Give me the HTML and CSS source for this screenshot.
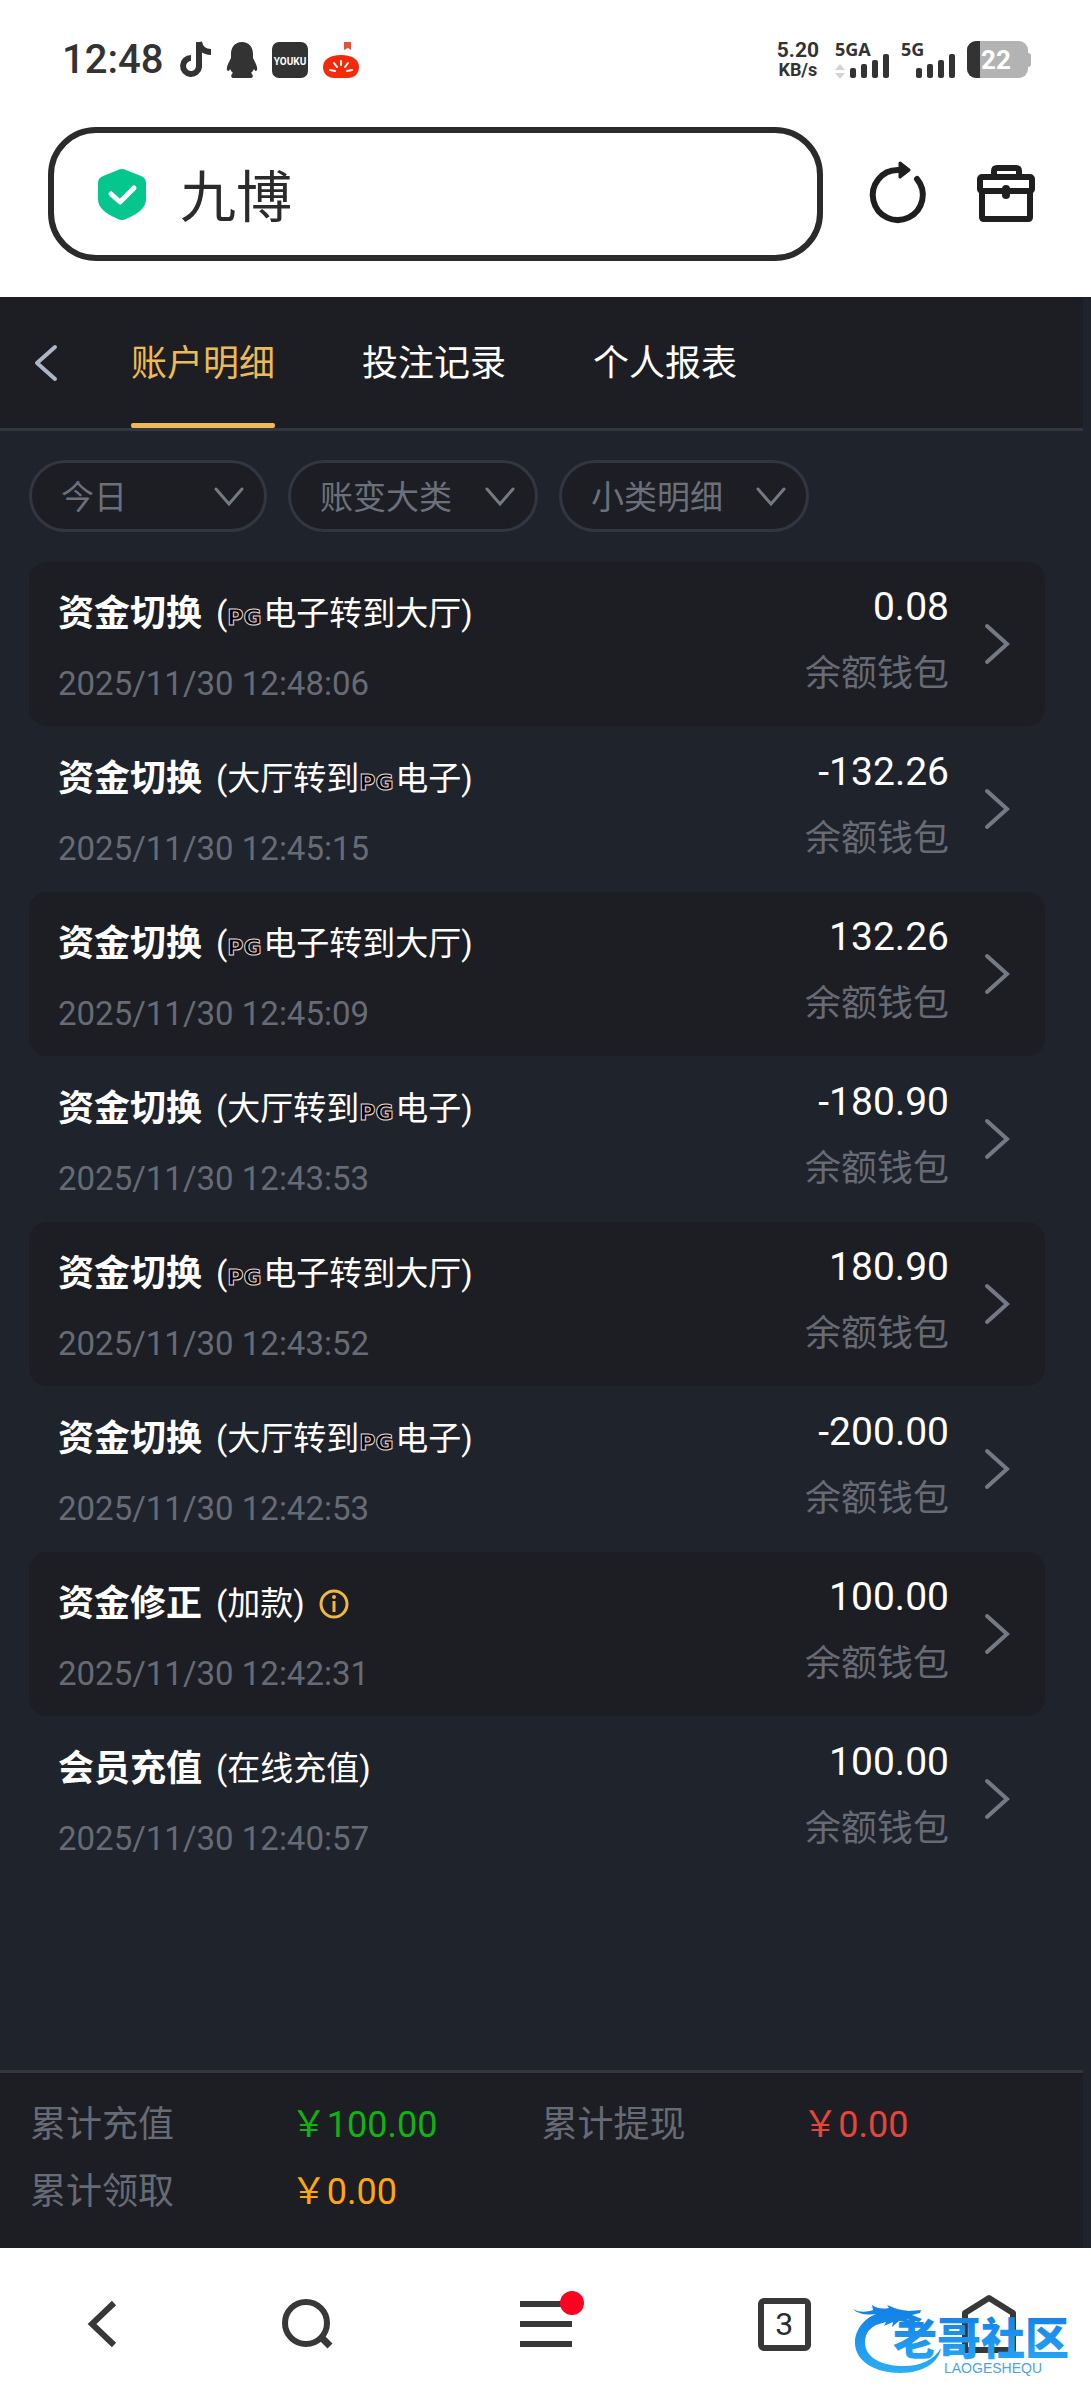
FILE: index.html
```html
<!DOCTYPE html>
<html lang="zh-CN">
<head>
    <meta charset="UTF-8">
    <meta name="viewport" content="width=device-width, initial-scale=1.0">
    <title>九博</title>
    <link rel="stylesheet" href="styles.css">
</head>
<body>
    <div class="status-bar">
        <div class="status-left">
            <span class="clock">12:48</span>
            <svg width="32" height="36" viewBox="0 0 32 36" fill="none" stroke="#333" stroke-width="6">
                <path d="M19 0V25a8 8 0 1 1-8-9" />
                <path d="M19 0c1 6 5 10 12 10" />
            </svg>
            <svg width="30" height="36" viewBox="0 0 30 36" fill="#333">
                <path d="M15 0c7 0 11 5 11 12v4c2 4 5 9 4 12-1 2-2 1-3-1-1 2-2 3-3 4 2 1 3 5-1 5h-5c-2 0-4 0-6 0H7c-4 0-3-4-1-5-1-1-2-2-3-4-1 2-2 3-3 1-1-3 2-8 4-12v-4C4 5 8 0 15 0z" />
            </svg>
            <svg width="36" height="36" viewBox="0 0 36 36">
                <rect width="36" height="36" rx="7" fill="#333" />
                <text x="18" y="23" text-anchor="middle" class="youku-text">youku</text>
            </svg>
            <svg width="36" height="36" viewBox="0 0 36 36">
                <path d="M21 0h7v8l-3-2-4 2z" fill="#e2543a" />
                <path d="M18 13c12 0 18 5 18 12 0 7-5 11-11 11H11C5 36 0 32 0 25c0-7 6-12 18-12z" fill="#f52a0c" />
                <path d="M18 19v4M11 21l3 4M25 21l-3 4M7 28l5 1M29 28l-5 1" stroke="#fff" stroke-width="2" stroke-linecap="round" />
            </svg>
        </div>
        <div class="status-right">
            <div class="net-speed">
                <span class="speed-value">5.20</span>
                <span class="speed-unit">KB/s</span>
            </div>
            <svg width="56" height="38" viewBox="0 0 56 38" fill="#333">
                <text x="0" y="15" class="signal-text">5GA</text>
                <path d="M5 23l5 6H0zM5 38l5-6H0z" fill="#d4d4d4" />
                <rect x="15" y="27" width="6" height="10" rx="2" />
                <rect x="26" y="23" width="6" height="14" rx="2" />
                <rect x="37" y="19" width="6" height="18" rx="2" />
                <rect x="48" y="13" width="6" height="24" rx="2" />
            </svg>
            <svg width="56" height="38" viewBox="0 0 56 38" fill="#333">
                <text x="0" y="15" class="signal-text">5G</text>
                <rect x="15" y="27" width="6" height="10" rx="2" />
                <rect x="26" y="23" width="6" height="14" rx="2" />
                <rect x="37" y="19" width="6" height="18" rx="2" />
                <rect x="48" y="13" width="6" height="24" rx="2" />
            </svg>
            <svg width="64" height="38" viewBox="0 0 64 38">
                <rect x="56" y="12" width="8" height="14" rx="3" fill="#b3b3b3" />
                <rect width="61" height="37" rx="9" fill="#b3b3b3" />
                <path d="M9 0h4v37H9a9 9 0 0 1-9-9V9a9 9 0 0 1 9-9z" fill="#333" />
                <text x="29" y="28" text-anchor="middle" class="battery-text">22</text>
            </svg>
        </div>
    </div>

    <div class="toolbar">
        <label class="search-box">
            <svg width="48" height="52" viewBox="0 0 48 52">
                <path d="M20 2q4-2 8 0l15 6q5 2 5 7v16c0 8-6 14-20 20q-4 2-8 0C6 45 0 39 0 31V15q0-5 5-7z" fill="#05c68d" />
                <path d="M13 26l9 8 14-14" fill="none" stroke="#fff" stroke-width="5" stroke-linecap="round" stroke-linejoin="round" />
            </svg>
            <input type="text" class="search-input" value="九博" aria-label="搜索">
        </label>
        <button class="icon-btn" aria-label="刷新">
            <svg width="58" height="64" viewBox="0 0 58 64" fill="none" stroke="#1f1f1f" stroke-width="6" stroke-linecap="round">
                <path d="M27 8a25 25 0 1 0 19 9" />
                <path d="M29 1l9 7-9 7z" fill="#1f1f1f" stroke-width="3" stroke-linejoin="round" />
            </svg>
        </button>
        <button class="icon-btn" aria-label="工具箱">
            <svg width="58" height="58" viewBox="0 0 58 58" fill="none" stroke="#1f1f1f" stroke-width="6" stroke-linejoin="round">
                <path d="M17 11V6q0-3 3-3h19q3 0 3 3v5" />
                <rect x="3" y="12" width="52" height="14" rx="2" />
                <path d="M5 26v26q0 2 2 2h44q2 0 2-2V26" />
                <path d="M29 24v6" stroke-width="8" stroke-linecap="round" />
            </svg>
        </button>
    </div>

    <main class="page">
        <header class="page-header">
            <button class="back-btn" aria-label="返回">
                <svg width="24" height="36" viewBox="0 0 24 36" fill="none" stroke="#adb6c4" stroke-width="4" stroke-linecap="round" stroke-linejoin="round">
                    <path d="M21 2L3 18l18 16" />
                </svg>
            </button>
            <nav class="tabs">
                <a href="#" class="tab active">账户明细</a>
                <a href="#" class="tab">投注记录</a>
                <a href="#" class="tab">个人报表</a>
            </nav>
        </header>

        <div class="filters">
            <div class="filter filter-date">
                <select aria-label="日期"><option>今日</option></select>
                <svg width="30" height="20" viewBox="0 0 30 20"><path d="M2 2l13 15L28 2" /></svg>
            </div>
            <div class="filter">
                <select aria-label="账变大类"><option>账变大类</option></select>
                <svg width="30" height="20" viewBox="0 0 30 20"><path d="M2 2l13 15L28 2" /></svg>
            </div>
            <div class="filter">
                <select aria-label="小类明细"><option>小类明细</option></select>
                <svg width="30" height="20" viewBox="0 0 30 20"><path d="M2 2l13 15L28 2" /></svg>
            </div>
        </div>

        <div class="records">
            <a href="#" class="record">
                <div class="record-info">
                    <div class="record-title"><b>资金切换</b><span class="detail">(<i class="pg">PG</i>电子转到大厅)</span></div>
                    <div class="record-time">2025/11/30 12:48:06</div>
                </div>
                <div class="record-money">
                    <div class="amount">0.08</div>
                    <div class="wallet">余额钱包</div>
                </div>
                <svg class="arrow" width="24" height="40" viewBox="0 0 24 40"><path d="M2 2l20 18L2 38" /></svg>
            </a>
            <a href="#" class="record">
                <div class="record-info">
                    <div class="record-title"><b>资金切换</b><span class="detail">(大厅转到<i class="pg">PG</i>电子)</span></div>
                    <div class="record-time">2025/11/30 12:45:15</div>
                </div>
                <div class="record-money">
                    <div class="amount">-132.26</div>
                    <div class="wallet">余额钱包</div>
                </div>
                <svg class="arrow" width="24" height="40" viewBox="0 0 24 40"><path d="M2 2l20 18L2 38" /></svg>
            </a>
            <a href="#" class="record">
                <div class="record-info">
                    <div class="record-title"><b>资金切换</b><span class="detail">(<i class="pg">PG</i>电子转到大厅)</span></div>
                    <div class="record-time">2025/11/30 12:45:09</div>
                </div>
                <div class="record-money">
                    <div class="amount">132.26</div>
                    <div class="wallet">余额钱包</div>
                </div>
                <svg class="arrow" width="24" height="40" viewBox="0 0 24 40"><path d="M2 2l20 18L2 38" /></svg>
            </a>
            <a href="#" class="record">
                <div class="record-info">
                    <div class="record-title"><b>资金切换</b><span class="detail">(大厅转到<i class="pg">PG</i>电子)</span></div>
                    <div class="record-time">2025/11/30 12:43:53</div>
                </div>
                <div class="record-money">
                    <div class="amount">-180.90</div>
                    <div class="wallet">余额钱包</div>
                </div>
                <svg class="arrow" width="24" height="40" viewBox="0 0 24 40"><path d="M2 2l20 18L2 38" /></svg>
            </a>
            <a href="#" class="record">
                <div class="record-info">
                    <div class="record-title"><b>资金切换</b><span class="detail">(<i class="pg">PG</i>电子转到大厅)</span></div>
                    <div class="record-time">2025/11/30 12:43:52</div>
                </div>
                <div class="record-money">
                    <div class="amount">180.90</div>
                    <div class="wallet">余额钱包</div>
                </div>
                <svg class="arrow" width="24" height="40" viewBox="0 0 24 40"><path d="M2 2l20 18L2 38" /></svg>
            </a>
            <a href="#" class="record">
                <div class="record-info">
                    <div class="record-title"><b>资金切换</b><span class="detail">(大厅转到<i class="pg">PG</i>电子)</span></div>
                    <div class="record-time">2025/11/30 12:42:53</div>
                </div>
                <div class="record-money">
                    <div class="amount">-200.00</div>
                    <div class="wallet">余额钱包</div>
                </div>
                <svg class="arrow" width="24" height="40" viewBox="0 0 24 40"><path d="M2 2l20 18L2 38" /></svg>
            </a>
            <a href="#" class="record">
                <div class="record-info">
                    <div class="record-title">
                        <b>资金修正</b><span class="detail">(加款)</span>
                        <svg width="30" height="30" viewBox="0 0 30 30" fill="none" stroke="#f0b840" stroke-width="3">
                            <circle cx="15" cy="15" r="13" />
                            <path d="M15 12v11" />
                            <circle cx="15" cy="8" r="1" stroke-width="2" />
                        </svg>
                    </div>
                    <div class="record-time">2025/11/30 12:42:31</div>
                </div>
                <div class="record-money">
                    <div class="amount">100.00</div>
                    <div class="wallet">余额钱包</div>
                </div>
                <svg class="arrow" width="24" height="40" viewBox="0 0 24 40"><path d="M2 2l20 18L2 38" /></svg>
            </a>
            <a href="#" class="record">
                <div class="record-info">
                    <div class="record-title"><b>会员充值</b><span class="detail">(在线充值)</span></div>
                    <div class="record-time">2025/11/30 12:40:57</div>
                </div>
                <div class="record-money">
                    <div class="amount">100.00</div>
                    <div class="wallet">余额钱包</div>
                </div>
                <svg class="arrow" width="24" height="40" viewBox="0 0 24 40"><path d="M2 2l20 18L2 38" /></svg>
            </a>
        </div>

        <footer class="totals">
            <div class="total"><span class="total-label">累计充值</span><span class="green">￥100.00</span></div>
            <div class="total"><span class="total-label">累计提现</span><span class="red">￥0.00</span></div>
            <div class="total"><span class="total-label">累计领取</span><span class="orange">￥0.00</span></div>
        </footer>
    </main>

    <nav class="bottom-nav">
        <button class="icon-btn" aria-label="后退">
            <svg width="30" height="50" viewBox="0 0 30 50" fill="none" stroke="#383838" stroke-width="6">
                <path d="M27 4L5 25l22 21" />
            </svg>
        </button>
        <button class="icon-btn" aria-label="搜索">
            <svg width="52" height="54" viewBox="0 0 52 54" fill="none" stroke="#383838" stroke-width="6">
                <circle cx="25" cy="26" r="21" />
                <path d="M39 39l10 10" stroke-width="7" />
            </svg>
        </button>
        <button class="icon-btn menu-btn" aria-label="菜单">
            <svg width="52" height="46" viewBox="0 0 52 46" fill="#383838">
                <rect y="0" width="52" height="6" />
                <rect y="20" width="52" height="6" />
                <rect y="40" width="52" height="6" />
            </svg>
            <span class="red-dot"></span>
        </button>
        <button class="icon-btn pages-btn">3</button>
        <button class="icon-btn" aria-label="主页">
            <svg width="54" height="62" viewBox="0 0 54 62" fill="none" stroke="#383838" stroke-width="6" stroke-linejoin="round">
                <path d="M27 5l24 15v37H3V20z" />
            </svg>
        </button>
        <svg class="watermark" width="230" height="78" viewBox="0 0 230 78">
            <defs>
                <linearGradient id="blue" x1="0" y1="0" x2="0" y2="78" gradientUnits="userSpaceOnUse">
                    <stop offset="0.2" stop-color="#1483e8" />
                    <stop offset="1" stop-color="#2db2f8" />
                </linearGradient>
            </defs>
            <!-- dragon tail, then head and whiskers -->
            <path d="M38 11C18 13 4 28 5 44c1 18 21 29 45 29s39-11 41-25c-7 12-21 18-37 18-22 0-39-8-39-24 0-10 7-17 19-20z" fill="url(#blue)" />
            <path d="M3 9c7 4 14 3 20 1l-1-5c6 4 11 4 17 3l-2-3c9 4 14 5 22 6l12-1-1 3-8 2 10 4-3 3-12-3 4 4-12-2-7 6 1-5-9 4 2-4-10 3 6-7-8 1 5-5C18 15 9 15 3 9z" fill="url(#blue)" />
            <text x="43" y="55" class="watermark-name" fill="url(#blue)">老哥社区</text>
            <text x="94" y="73" class="watermark-sub" fill="#4aa3e8">LAOGESHEQU</text>
        </svg>
    </nav>
</body>
</html>
```

FILE: styles.css
```css
* {
  box-sizing: border-box;
}

body {
  margin: 0;
  min-height: 100vh;
  display: flex;
  flex-direction: column;
  background: #fff;
  font-family: Roboto, 'Noto Sans CJK SC', sans-serif;
  color: #fff;
}

a {
  color: inherit;
  text-decoration: none;
}

button {
  padding: 0;
  border: 0;
  background: none;
  font-family: inherit;
  cursor: pointer;
}

svg {
  display: block;
  flex-shrink: 0;
  overflow: visible;
}

/* 手机状态栏 */
.status-bar {
  display: flex;
  justify-content: space-between;
  align-items: center;
  height: 120px;
  padding: 0 60px 0 62px;
  color: #333;
}

.status-left {
  display: flex;
  align-items: center;
  gap: 15px;
}

.clock {
  margin-right: 2px;
  font-size: 40px;
  font-weight: 500;
  line-height: 48px;
}

.youku-text {
  font: 700 10px Roboto, sans-serif;
  text-transform: uppercase;
  fill: #fff;
}

.status-right {
  display: flex;
  align-items: center;
  gap: 10px;
}

.net-speed {
  display: flex;
  flex-direction: column;
  align-items: center;
  margin-right: 6px;
  font-weight: 700;
  line-height: 20px;
}

.speed-value {
  font-size: 21px;
}

.speed-unit {
  font-size: 18px;
}

.signal-text {
  font: 700 18px 'Noto Sans', sans-serif;
}

.battery-text {
  font: 700 26px Roboto, sans-serif;
  fill: #fff;
}

/* 地址栏 */
.toolbar {
  display: flex;
  align-items: center;
  gap: 48px;
  padding: 7px 56px 36px 48px;
}

.search-box {
  flex: 1;
  min-width: 0;
  display: flex;
  align-items: center;
  gap: 34px;
  height: 134px;
  padding: 0 44px;
  border: 6px solid #2b2b2b;
  border-radius: 48px;
}

.search-input {
  flex: 1;
  min-width: 0;
  padding: 0 0 4px;
  border: 0;
  outline: 0;
  background: none;
  color: #2b2b2b;
  font-family: inherit;
  font-size: 56px;
}

.icon-btn {
  position: relative;
  color: #2b2b2b;
}

/* 页面主体 */
.page {
  flex: 1;
  display: flex;
  flex-direction: column;
  padding-right: 8px;
  background: #1f232c;
}

.page-header {
  display: flex;
  height: 134px;
  padding-left: 34px;
  background: #1d1e23;
  border-bottom: 3px solid #313640;
}

.back-btn {
  width: 24px;
  margin-right: 73px;
  display: flex;
  align-items: center;
}

.tabs {
  display: flex;
  gap: 87px;
}

.tab {
  display: flex;
  align-items: center;
  border-bottom: 5px solid transparent;
  font-size: 36px;
}

.tab.active {
  position: relative;
  color: #ecba58;
}

.tab.active::after {
  content: '';
  position: absolute;
  left: 0;
  right: 0;
  bottom: -5px;
  height: 5px;
  border-radius: 2px;
  background: #ecba58;
}

.filters {
  display: flex;
  gap: 21px;
  padding: 29px 29px 30px;
}

.filter {
  position: relative;
  width: 250px;
}

.filter-date {
  width: 238px;
}

.filter select {
  width: 100%;
  height: 72px;
  padding: 2px 29px 0;
  appearance: none;
  background: #1d1e23;
  border: 3px solid #313640;
  border-radius: 36px;
  color: #6b717c;
  font-family: inherit;
  font-size: 33px;
}

.filter svg {
  position: absolute;
  right: 23px;
  top: 27px;
  fill: none;
  stroke: #747a85;
  stroke-width: 3;
  stroke-linecap: round;
  pointer-events: none;
}

/* 账变记录 */
.records {
  flex: 1;
  padding: 0 38px 0 29px;
}

.record {
  display: flex;
  align-items: flex-start;
  height: 164px;
  margin-bottom: 1px;
  padding: 0 36px 0 29px;
  border-radius: 18px;
}

.record:nth-child(odd) {
  background: #1d1e23;
}

.record-info {
  flex: 1;
  padding-top: 28px;
}

.record-title {
  display: flex;
  align-items: center;
  gap: 14px;
  margin-bottom: 22px;
  font-size: 36px;
  line-height: 48px;
}

.detail {
  font-size: 33px;
}

.pg {
  display: inline-block;
  width: 36px;
  color: #000;
  font: 700 22px/22px 'DejaVu Sans', sans-serif;
  -webkit-text-stroke: 1px #e8d6d0;
}

.record-time {
  color: #666b76;
  font-size: 33px;
  line-height: 48px;
}

.record-money {
  padding-top: 21px;
  text-align: right;
  line-height: 48px;
}

.amount {
  margin-bottom: 19px;
  font-size: 39px;
}

.wallet {
  color: #666b76;
  font-size: 36px;
}

.arrow {
  align-self: center;
  margin-left: 36px;
  fill: none;
  stroke: #747a85;
  stroke-width: 4;
  stroke-linecap: round;
}

/* 累计 */
.totals {
  display: grid;
  grid-template-columns: 1fr 1fr;
  align-content: start;
  row-gap: 19px;
  height: 178px;
  padding: 28px 30px 0;
  background: #1d1e23;
  border-top: 3px solid #313640;
  font-size: 36px;
  line-height: 48px;
}

.total {
  display: flex;
}

.total-label {
  width: 51%;
  color: #666b76;
}

.green {
  color: #0fb314;
}

.red {
  color: #e5453c;
}

.orange {
  color: #ffa60f;
}

/* 浏览器底栏 */
.bottom-nav {
  position: relative;
  display: grid;
  grid-template-columns: 3fr 3fr 4fr 3fr 3fr;
  place-items: center;
  height: 152px;
}

.red-dot {
  position: absolute;
  top: -10px;
  right: -12px;
  width: 24px;
  height: 24px;
  border-radius: 50%;
  background: #fb0220;
}

.pages-btn {
  width: 53px;
  height: 53px;
  border: 6px solid #383838;
  border-radius: 6px;
  font-size: 32px;
  line-height: 40px;
}

.watermark {
  position: absolute;
  right: 11px;
  bottom: 22px;
}

.watermark-name {
  font: 900 44px 'Noto Sans CJK SC', sans-serif;
}

.watermark-sub {
  font: 400 14px 'Liberation Sans', sans-serif;
}
```
